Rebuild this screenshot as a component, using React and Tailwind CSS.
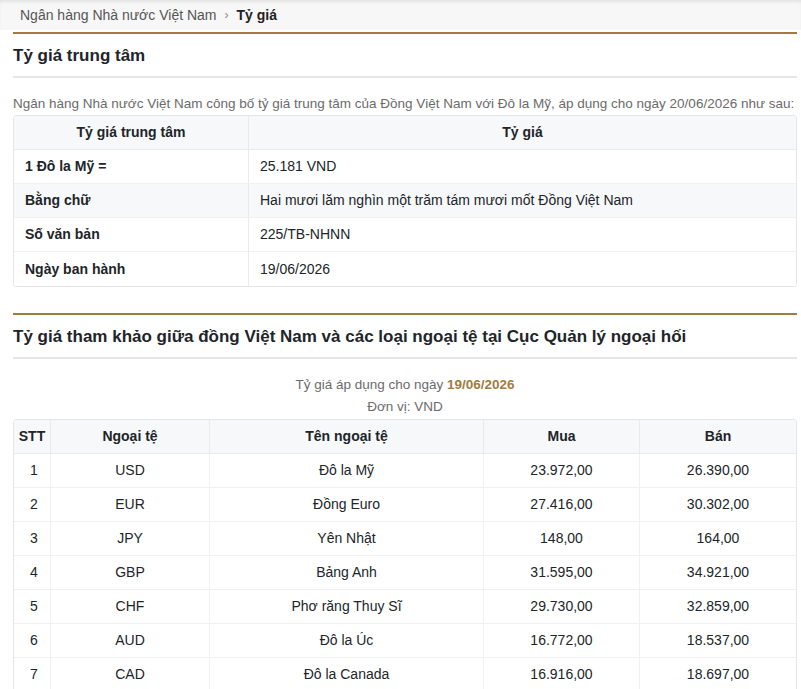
const rates = [
  ['1', 'USD', 'Đô la Mỹ', '23.972,00', '26.390,00'],
  ['2', 'EUR', 'Đồng Euro', '27.416,00', '30.302,00'],
  ['3', 'JPY', 'Yên Nhật', '148,00', '164,00'],
  ['4', 'GBP', 'Bảng Anh', '31.595,00', '34.921,00'],
  ['5', 'CHF', 'Phơ răng Thuy Sĩ', '29.730,00', '32.859,00'],
  ['6', 'AUD', 'Đô la Úc', '16.772,00', '18.537,00'],
  ['7', 'CAD', 'Đô la Canada', '16.916,00', '18.697,00'],
];

const central = [
  ['1 Đô la Mỹ =', '25.181 VND'],
  ['Bằng chữ', 'Hai mươi lăm nghìn một trăm tám mươi mốt Đồng Việt Nam'],
  ['Số văn bản', '225/TB-NHNN'],
  ['Ngày ban hành', '19/06/2026'],
];

function Section({ title }) {
  return (
    <>
      <div className="h-[2px] bg-[#a27c3c]" />
      <h2 className="text-[17px] leading-[20px] font-bold text-[#212529] pt-[12px] pb-[10px] border-b-2 border-[#e5e5e5]">{title}</h2>
    </>
  );
}

export default function App() {
  return (
    <div className="w-[801px] h-[689px] overflow-hidden bg-white text-[#212529] font-[family-name:Liberation_Sans,Arial,sans-serif]">
      <div className="h-[30px] bg-[#f7f7f7] shadow-[inset_0_3px_4px_-2px_rgba(0,0,0,0.12)] flex items-center px-5 text-[14px] text-[#555]">
        <span>Ngân hàng Nhà nước Việt Nam</span>
        <span className="mx-2 text-[#888] text-[12px]">›</span>
        <span className="font-bold text-[#222]">Tỷ giá</span>
      </div>
      <div className="pl-[13px] pr-[4px] pt-[2px]">
        <Section title="Tỷ giá trung tâm" />
        <p className="text-[13.5px] leading-[18px] text-[#6b6b6b] mt-[17px] mb-[2px] whitespace-nowrap">
          Ngân hàng Nhà nước Việt Nam công bố tỷ giá trung tâm của Đồng Việt Nam với Đô la Mỹ, áp dụng cho ngày 20/06/2026 như sau:
        </p>
        <div className="border border-[#e6e6e6] rounded-[3px] overflow-hidden text-[14px]">
          <div className="grid grid-cols-[235px_1fr] h-[34px] bg-[#f7f8fa] font-bold border-b border-[#eaeaea]">
            <div className="flex items-center justify-center border-r border-[#eaeaea]">Tỷ giá trung tâm</div>
            <div className="flex items-center justify-center">Tỷ giá</div>
          </div>
          {central.map(([k, v], i) => (
            <div key={k} className={`grid grid-cols-[235px_1fr] h-[34px] ${i === 1 ? 'bg-[#f7f8fa]' : 'bg-white'} ${i < 3 ? 'border-b border-[#f0f0f0]' : ''}`}>
              <div className="flex items-center px-[11px] font-bold border-r border-[#eaeaea]">{k}</div>
              <div className="flex items-center px-[11px]">{v}</div>
            </div>
          ))}
        </div>
        <div className="h-[26px]" />
        <Section title="Tỷ giá tham khảo giữa đồng Việt Nam và các loại ngoại tệ tại Cục Quản lý ngoại hối" />
        <div className="text-center text-[13.5px] text-[#6b6b6b] mt-[15px] leading-[22px]">
          <div>Tỷ giá áp dụng cho ngày <span className="font-bold text-[#a27c3c]">19/06/2026</span></div>
          <div>Đơn vị: VND</div>
        </div>
        <div className="border border-[#e6e6e6] rounded-[3px] overflow-hidden text-[14px] mt-[1px]">
          <div className="grid grid-cols-[37px_159px_274px_156px_1fr] h-[34px] bg-[#f7f8fa] font-bold border-b border-[#eaeaea]">
            {['STT', 'Ngoại tệ', 'Tên ngoại tệ', 'Mua', 'Bán'].map((h, i) => (
              <div key={h} className={`flex items-center justify-center ${i < 4 ? 'border-r border-[#eaeaea]' : ''}`}>{h}</div>
            ))}
          </div>
          {rates.map((r) => (
            <div key={r[0]} className="grid grid-cols-[37px_159px_274px_156px_1fr] h-[34px] border-b border-[#f0f0f0]">
              {r.map((c, i) => (
                <div key={i} className={`flex items-center ${i === 0 ? 'pl-[16px]' : 'justify-center'} ${i < 4 ? 'border-r border-[#f0f0f0]' : ''}`}>{c}</div>
              ))}
            </div>
          ))}
        </div>
      </div>
    </div>
  );
}
